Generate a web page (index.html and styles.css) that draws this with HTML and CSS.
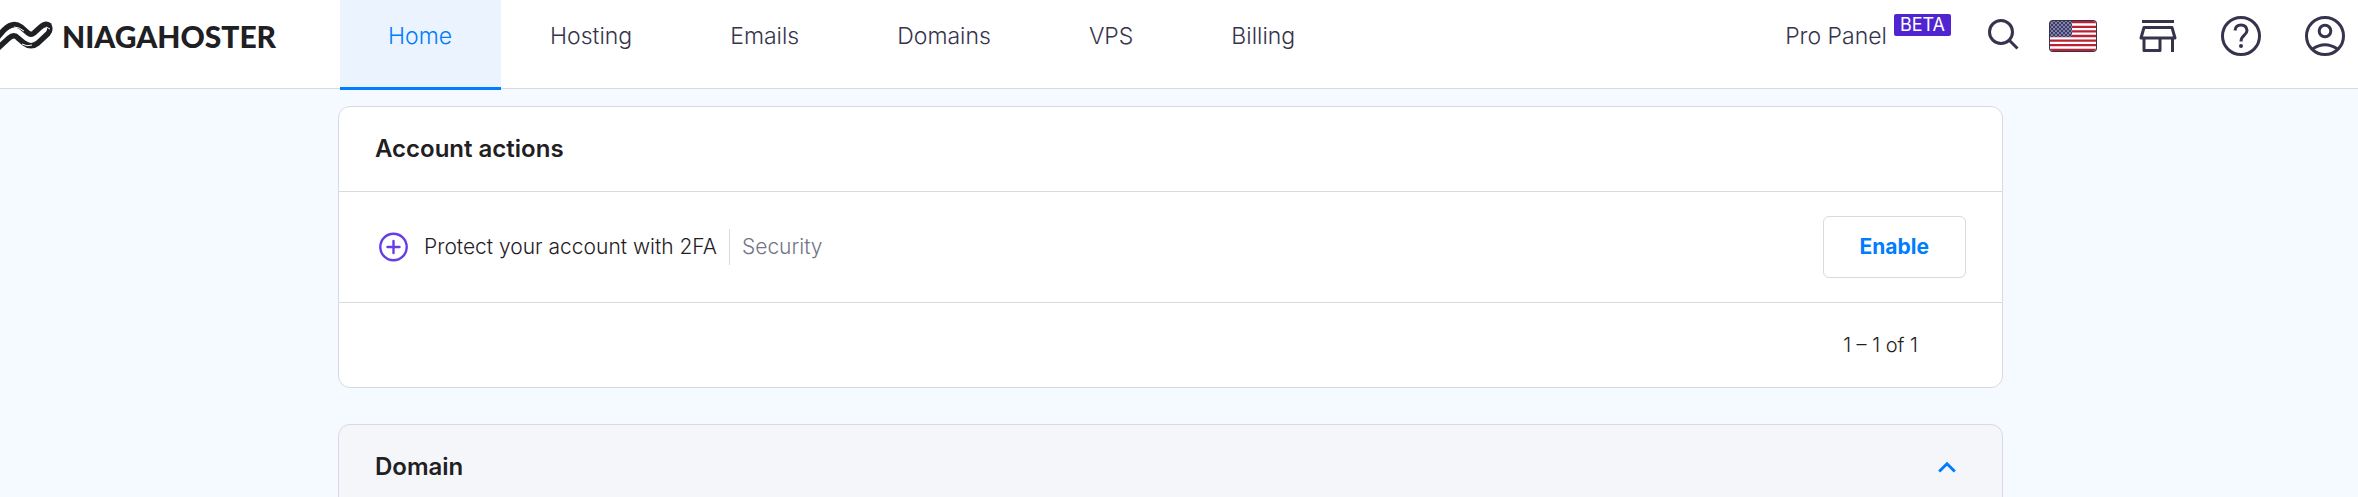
FILE: index.html
```html
<!DOCTYPE html>
<html lang="en">
<head>
<meta charset="utf-8">
<title>Niagahoster</title>
<link rel="stylesheet" href="styles.css">
</head>
<body>
<header class="topbar">
  <a class="logo" href="#">
    <svg class="logo-mark" width="53" height="30" viewBox="0 0 53 30" aria-hidden="true">
      <g fill="none" stroke="#1f2023" stroke-width="5.500">
        <path d="M-4 18 L4 9 Q13 0 21 6 L28 12 Q31 14.500 34 12 L40 6.500 Q46 1 50 5"/>
        <path d="M-3 28 L9 17 Q14 12.500 18 17 L24 22 Q31 27.500 38 22 L48 12.500 Q51 9 49 4.500"/>
      </g>
      <path d="M14 6 Q19 6 24 10 M46 6 L50 8 M22 23 Q27 26 32 24" fill="none" stroke="#fff" stroke-width="1"/>
    </svg>
    <span class="logo-text">NIAGAHOSTER</span>
  </a>
  <nav class="nav">
    <a class="tab tab-active" href="#">Home</a>
    <a class="tab" href="#">Hosting</a>
    <a class="tab" href="#">Emails</a>
    <a class="tab" href="#">Domains</a>
    <a class="tab" href="#">VPS</a>
    <a class="tab" href="#">Billing</a>
  </nav>
  <div class="tools">
    <a class="pro" href="#">Pro Panel <span class="beta">BETA</span></a>
    <button class="tool tool-search" type="button" aria-label="Search">
      <svg width="32" height="32" viewBox="0 0 32 32" fill="none" stroke="#36344d" stroke-width="3"><circle cx="14" cy="14" r="11.500"/><path d="M22 22l8.500 8.500"/></svg>
    </button>
    <button class="tool tool-flag" type="button" aria-label="Language">
      <svg width="48" height="32" viewBox="0 0 48 32">
        <defs>
          <clipPath id="flag"><rect x="1" y="1" width="46" height="30" rx="3"/></clipPath>
          <pattern id="stars" width="4" height="4" patternUnits="userSpaceOnUse"><circle cx="1" cy="1" r=".7" fill="#fff"/><circle cx="3" cy="3" r=".7" fill="#fff"/></pattern>
        </defs>
        <rect width="48" height="32" rx="4" fill="#36344d"/>
        <g clip-path="url(#flag)">
          <rect width="48" height="32" fill="#fff"/>
          <path d="M0 2.200h48M0 6.800h48M0 11.400h48M0 16h48M0 20.600h48M0 25.200h48M0 29.800h48" stroke="#b92234" stroke-width="2.300"/>
          <rect width="23" height="17" fill="#3c3b6e"/><rect width="23" height="17" fill="url(#stars)"/>
        </g>
      </svg>
    </button>
    <button class="tool" type="button" aria-label="Store">
      <svg width="38" height="34" viewBox="0 0 38 34" fill="none" stroke="#36344d" stroke-width="3" stroke-linejoin="round"><path d="M3 2.500h32" /><path d="M5 8.500h28l3 10.500H2zM5 19v12.500h16V19M33.500 19v14"/></svg>
    </button>
    <button class="tool" type="button" aria-label="Help">
      <svg width="40" height="40" viewBox="0 0 40 40" fill="none" stroke="#36344d" stroke-width="3"><circle cx="20" cy="20" r="18.500"/><path d="M14 14.500Q14.500 9 20 9t6 5.500c0 5-6 4.500-6 11"/><circle cx="20" cy="30" r="2" fill="#36344d" stroke="none"/></svg>
    </button>
    <button class="tool" type="button" aria-label="Profile">
      <svg width="40" height="40" viewBox="0 0 40 40" fill="none" stroke="#36344d" stroke-width="3"><circle cx="20" cy="20" r="18.500"/><circle cx="20" cy="15" r="5.800"/><path d="M7.500 33Q20 24.500 32.500 33"/></svg>
    </button>
  </div>
</header>
<main class="content">
  <section class="card">
    <h2 class="card-head">Account actions</h2>
    <div class="action">
      <svg class="plus" width="29" height="30" viewBox="0 0 29 30" fill="none" stroke="#673de6" stroke-width="2.400" stroke-linecap="round"><circle cx="14.500" cy="15" r="13.200"/><path d="M8.500 15h12M14.500 9v12"/></svg>
      <span class="action-title">Protect your account with 2FA</span>
      <span class="action-tag">Security</span>
      <button class="enable" type="button">Enable</button>
    </div>
    <div class="pager">1 – 1 of 1</div>
  </section>
  <section class="card card-muted">
    <h2 class="card-head">Domain
      <button class="collapse" type="button" aria-label="Collapse">
        <svg width="18" height="12" viewBox="0 0 18 12" fill="none" stroke="#007cff" stroke-width="3"><path d="M1.200 10.500L9 2.800l7.800 7.700"/></svg>
      </button>
    </h2>
  </section>
</main>
</body>
</html>
```
FILE: styles.css
```css
* {
  box-sizing: border-box;
}

body {
  margin: 0;
  background: #f4faff;
  color: #1f2023;
  font-family: Inter, "Liberation Sans", sans-serif;
  font-size: 21px;
  font-weight: 300;
  line-height: 28px;
}

a {
  color: inherit;
  text-decoration: none;
}

button {
  padding: 0;
  border: 0;
  background: none;
  font: inherit;
  cursor: pointer;
}

svg {
  display: block;
}

.topbar {
  display: flex;
  height: 89px;
  padding-right: 13px;
  background: #fff;
  border-bottom: 1px solid #d8dadf;
  color: #36344d;
  font-size: 23px;
}

.logo {
  display: flex;
  align-items: center;
  gap: 9px;
  width: 340px;
  padding-bottom: 16px;
  color: #1f2023;
}

.logo-text {
  font-family: Lato, sans-serif;
  font-size: 30px;
  font-weight: 900;
}

.nav {
  display: flex;
  flex: 1;
  gap: 1px;
  height: 90px;
}

.tab {
  display: flex;
  align-items: center;
  padding: 0 49px 16px 48px;
  border-bottom: 3px solid transparent;
}

.tab-active {
  background: #ebf3ff;
  border-color: #007cff;
  color: #007cff;
}

.tools {
  display: flex;
  align-items: center;
  gap: 44px;
  padding-bottom: 17px;
}

.pro {
  display: flex;
  align-items: center;
  gap: 7px;
}

.beta {
  margin-bottom: 22px;
  padding: 0 6px;
  border-radius: 2px;
  background: #5025d1;
  color: #fff;
  font-size: 18px;
  font-weight: 400;
  line-height: 22px;
}

.tool-search {
  margin: 0 -14px 4px -8px;
}

.tool-flag {
  margin-right: -2px;
}

.content {
  display: grid;
  gap: 36px;
  padding: 17px 355px 0 338px;
}

.card {
  background: #fff;
  border: 1px solid #d8dadf;
  border-radius: 12px;
}

.card-muted {
  background: #f4f6f9;
}

.card-head {
  display: flex;
  align-items: center;
  justify-content: space-between;
  height: 84px;
  margin: 0;
  padding: 0 46px 0 36px;
  font-size: 24px;
  font-weight: 600;
}

.action {
  display: flex;
  align-items: center;
  height: 112px;
  padding: 0 36px 0 40px;
  border-top: 1px solid #d8dadf;
  border-bottom: 1px solid #d8dadf;
}

.action-title {
  padding: 4px 12px 4px 16px;
  border-right: 1px solid #d8dadf;
}

.action-tag {
  padding-left: 12px;
  color: #727586;
}

.enable {
  height: 62px;
  margin-left: auto;
  padding: 0 36px;
  border: 1px solid #d8dadf;
  border-radius: 6px;
  color: #007cff;
  font-weight: 700;
}

.pager {
  padding: 28px 84px 28px 36px;
  font-size: 20px;
  text-align: right;
}
```
